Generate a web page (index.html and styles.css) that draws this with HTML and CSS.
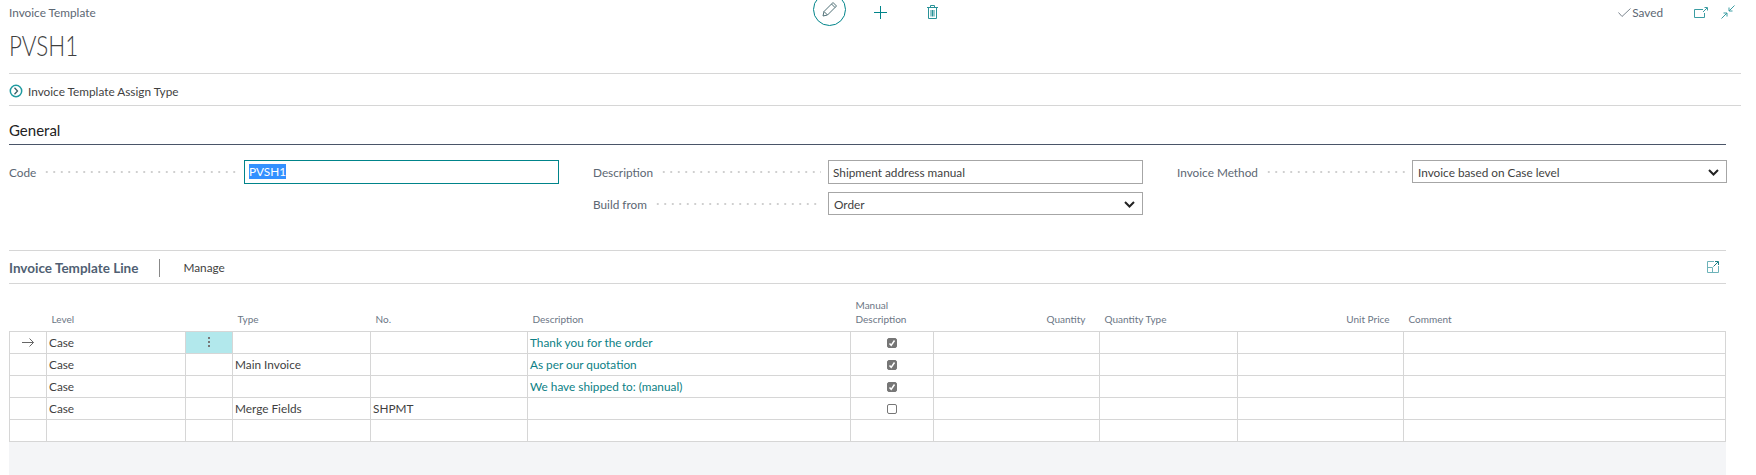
FILE: index.html
```html
<!DOCTYPE html>
<html lang="en">
<head>
    <meta charset="UTF-8">
    <title>Invoice Template</title>
    <link rel="stylesheet" href="styles.css">
</head>
<body>
    <div class="page">
        <!-- top bar -->
        <div class="topbar">
            <div class="caption">Invoice Template</div>
            <div class="tools">
                <span class="edit-btn">
                    <svg width="17" height="17" viewBox="0 0 17 17" fill="none" stroke="#4f6f76" stroke-width="1"><path d="M2 15l1-4.500L12 1.500l3.500 3.500L6.500 14z"/><path d="M3 10.500l3.500 3.500M10.500 3l3.500 3.500"/></svg>
                </span>
                <svg width="13" height="13" viewBox="0 0 13 13" stroke="#00848a" stroke-width="1"><path d="M0 6.500h13M6.500 0v13"/></svg>
                <svg width="11" height="14" viewBox="0 0 11 14" fill="none" stroke="#2a9298" stroke-width="1"><path d="M0 2.500h11M3.500 2.500V.5h4v2M1.500 2.500v11h8v-11"/><path d="M4 5v6.500M5.500 5v6.500M7 5v6.500"/></svg>
            </div>
            <div class="status">
                <svg width="13" height="9" viewBox="0 0 13 9" fill="none" stroke="#7d8790" stroke-width="1"><path d="M.5 4.500l3.500 4L12.500.5"/></svg>
                <span class="saved">Saved</span>
                <svg class="open-icon" width="14" height="11" viewBox="0 0 14 11" fill="none" stroke="#3b9da3" stroke-width="1"><path d="M9 2.500H.5v8h10V6"/><path d="M9 5l4-4M10.500.5H13.500V3.500"/></svg>
                <svg width="14" height="14" viewBox="0 0 14 14" fill="none" stroke="#3b9da3" stroke-width="1"><path d="M13.500.5L8 6M8 2.500V6h3.500"/><path d="M.5 13.500L6 8M2.500 8H6v3.500"/></svg>
            </div>
        </div>
        <h1 class="title"><span class="title-text">PVSH1</span></h1>

        <div class="actions">
            <svg width="14" height="14" viewBox="0 0 14 14" fill="none"><circle cx="7" cy="7" r="5.700" stroke="#1f9aa0" stroke-width="1.500"/><path d="M5.500 3.800L8.500 7 5.500 10.200" stroke="#3a5f66" stroke-width="1.300"/></svg>
            <span>Invoice Template Assign Type</span>
        </div>

        <div class="section">
            <h2 class="section-title">General</h2>
            <div class="fields">
                <div class="col">
                    <div class="field">
                        <span class="label">Code</span><span class="dots"></span>
                        <div class="box box-focus"><span class="selected">PVSH1</span></div>
                    </div>
                </div>
                <div class="col">
                    <div class="field">
                        <span class="label">Description</span><span class="dots"></span>
                        <div class="box">Shipment address manual</div>
                    </div>
                    <div class="field">
                        <span class="label">Build from</span><span class="dots"></span>
                        <div class="box box-select">Order
                            <svg width="11" height="7" viewBox="0 0 11 7" fill="none" stroke="#222" stroke-width="2"><path d="M1 1l4.500 4.500L10 1"/></svg>
                        </div>
                    </div>
                </div>
                <div class="col">
                    <div class="field field-top">
                        <span class="label">Invoice Method</span><span class="dots"></span>
                        <div class="box box-select">Invoice based on Case level
                            <svg width="11" height="7" viewBox="0 0 11 7" fill="none" stroke="#222" stroke-width="2"><path d="M1 1l4.500 4.500L10 1"/></svg>
                        </div>
                    </div>
                </div>
            </div>
        </div>

        <div class="lines">
            <div class="lines-bar">
                <span class="lines-title">Invoice Template Line</span>
                <span class="lines-manage">Manage</span>
                <svg class="expand" width="12" height="12" viewBox="0 0 12 12" fill="none" stroke="#6db3b9" stroke-width="1"><path d="M7 .5H.5v11h11V5"/><path d="M.5 6.500h5v5"/><path d="M6.500 5.500L11 1M8 .5h3.500V4" stroke="#1b7f86"/></svg>
            </div>

            <table class="grid">
                <colgroup>
                    <col class="c-arrow"><col class="c-level"><col class="c-menu"><col class="c-type"><col class="c-no">
                    <col class="c-desc"><col class="c-manual"><col class="c-qty"><col class="c-qtype"><col class="c-price"><col>
                </colgroup>
                <thead>
                    <tr>
                        <th></th><th>Level</th><th></th><th>Type</th><th>No.</th><th>Description</th>
                        <th>Manual<br>Description</th><th class="num">Quantity</th><th>Quantity Type</th><th class="num">Unit Price</th><th>Comment</th>
                    </tr>
                </thead>
                <tbody>
                    <tr>
                        <td class="arrow"><svg width="12" height="9" viewBox="0 0 12 9" fill="none" stroke="#666" stroke-width="1"><path d="M0 4.500h11.500M7.500.5l4 4-4 4"/></svg></td>
                        <td>Case</td>
                        <td class="menu"><span class="kebab"><i></i><i></i><i></i></span></td>
                        <td></td><td></td>
                        <td class="link">Thank you for the order</td>
                        <td class="check"><span class="cb on"><svg width="8" height="8" viewBox="0 0 8 8" fill="none" stroke="#fff" stroke-width="1.500"><path d="M1.500 4.500L3.200 6.300 6.500 1.500"/></svg></span></td>
                        <td></td><td></td><td></td><td></td>
                    </tr>
                    <tr>
                        <td></td><td>Case</td><td></td><td>Main Invoice</td><td></td>
                        <td class="link">As per our quotation</td>
                        <td class="check"><span class="cb on"><svg width="8" height="8" viewBox="0 0 8 8" fill="none" stroke="#fff" stroke-width="1.500"><path d="M1.500 4.500L3.200 6.300 6.500 1.500"/></svg></span></td>
                        <td></td><td></td><td></td><td></td>
                    </tr>
                    <tr>
                        <td></td><td>Case</td><td></td><td></td><td></td>
                        <td class="link">We have shipped to: (manual)</td>
                        <td class="check"><span class="cb on"><svg width="8" height="8" viewBox="0 0 8 8" fill="none" stroke="#fff" stroke-width="1.500"><path d="M1.500 4.500L3.200 6.300 6.500 1.500"/></svg></span></td>
                        <td></td><td></td><td></td><td></td>
                    </tr>
                    <tr>
                        <td></td><td>Case</td><td></td><td>Merge Fields</td><td>SHPMT</td><td></td>
                        <td class="check"><span class="cb"></span></td>
                        <td></td><td></td><td></td><td></td>
                    </tr>
                    <tr>
                        <td></td><td></td><td></td><td></td><td></td><td></td><td></td><td></td><td></td><td></td><td></td>
                    </tr>
                </tbody>
            </table>
            <div class="filler"></div>
        </div>
    </div>
</body>
</html>
```

FILE: styles.css
```css
*{
    margin: 0;
    padding: 0;
    box-sizing: border-box;
}
html,body{
    height: 100%;
    overflow: hidden;
}
body{
    background: #fff;
    color: #3f3f3f;
    font-family: "Lato", "Open Sans", sans-serif;
    font-size: 11.8px;
}
.page{
    height: 100%;
    padding-left: 9px;
    padding-right: 15px;
    display: flex;
    flex-direction: column;
}

/* top bar */
.topbar{
    height: 24px;
    display: grid;
    grid-template-columns: 1fr auto 1fr;
    grid-template-rows: 24px;
    align-items: center;
}
.caption{
    color: #5c6773;
}
.tools{
    display: flex;
    align-items: center;
    gap: 40px;
}
.edit-btn{
    width: 33px;
    height: 33px;
    flex: none;
    margin-top: -5px;
    margin-right: -12px;
    border: 1px solid #00848a;
    border-radius: 50%;
    display: flex;
    align-items: center;
    justify-content: center;
}
.status{
    display: flex;
    align-items: center;
    justify-content: flex-end;
    padding-right: 6px;
}
.saved{
    margin-left: 1px;
    color: #5c6773;
}
.open-icon{
    margin-left: 31px;
    margin-right: 13px;
}
.title{
    height: 49px;
    margin-top: 1px;
    font-size: 27px;
    font-weight: 300;
    line-height: 42px;
    border-bottom: 1px solid #d6d6d6;
}
.title-text{
    display: inline-block;
    transform: scaleX(.83);
    transform-origin: left;
}
.actions{
    height: 32px;
    padding-top: 3px;
    display: flex;
    align-items: center;
    gap: 5px;
    border-bottom: 1px solid #d6d6d6;
}

/* General */
.section{
    padding-right: 15px;
}
.section-title{
    height: 39px;
    padding-top: 14px;
    font-size: 15px;
    line-height: 20px;
    font-weight: 400;
    color: #222;
    border-bottom: 1px solid #4a5568;
}
.fields{
    display: grid;
    grid-template-columns: repeat(3, 550px);
    column-gap: 34px;
    margin-top: 15px;
    height: 90px;
}
.col{
    display: flex;
    flex-direction: column;
    gap: 8px;
}
.field{
    display: flex;
    align-items: center;
}
.field-top{
    height: 24px;
}
.label{
    padding-top: 1px;
    color: #5c6773;
    white-space: nowrap;
}
.dots{
    flex: 1;
    height: 2px;
    margin: 0 7px;
    background-image: radial-gradient(circle, #cfcfcf 0.7px, transparent 0.8px);
    background-size: 7.500px 2px;
}
.box{
    width: 315px;
    height: 24px;
    padding: 1px 0 0 4px;
    border: 1px solid #a6a6a6;
    line-height: 21px;
}
.box-focus{
    border-color: #00848a;
    padding-top: 0;
}
.selected{
    display: inline-block;
    height: 15px;
    line-height: 15px;
    background: #3390ff;
    color: #fff;
}
.box-select{
    height: 23px;
    display: flex;
    align-items: center;
    justify-content: space-between;
    padding: 1px 7px 0 5px;
}
.field-top .box-select{
    align-self: flex-start;
}

/* lines part */
.lines{
    flex: 1;
    display: flex;
    flex-direction: column;
    padding-right: 15px;
}
.lines-bar{
    height: 34px;
    padding-top: 1px;
    display: flex;
    align-items: center;
    border-top: 1px solid #d6d6d6;
    border-bottom: 1px solid #d6d6d6;
}
.lines-title{
    font-size: 13.500px;
    font-weight: 700;
    color: #505f73;
    padding-right: 21px;
    border-right: 1px solid #888;
    line-height: 18px;
}
.lines-manage{
    margin-left: 23px;
}
.expand{
    margin-left: auto;
    margin-right: 7px;
    margin-top: -2px;
}
.grid{
    width: 100%;
    table-layout: fixed;
    border-collapse: collapse;
}
.c-arrow{ width: 37px; }
.c-level{ width: 139px; }
.c-menu{ width: 47px; }
.c-type{ width: 138px; }
.c-no{ width: 157px; }
.c-desc{ width: 323px; }
.c-manual{ width: 83px; }
.c-qty{ width: 166px; }
.c-qtype{ width: 138px; }
.c-price{ width: 166px; }
.grid th{
    height: 47px;
    padding: 0 5px 5px;
    font-size: 10px;
    font-weight: 400;
    line-height: 14px;
    color: #6b7685;
    text-align: left;
    vertical-align: bottom;
}
.grid th.num{
    text-align: right;
    padding-right: 14px;
}
.grid td{
    height: 22px;
    padding: 2px 3px 0 2px;
    border: 1px solid #d6d6d6;
    line-height: 14px;
    white-space: nowrap;
}
.grid td.link{
    color: #0c7f85;
}
.grid td.arrow,
.grid td.check{
    text-align: center;
    padding: 1px 0 0;
    line-height: 0;
}
.grid td.menu{
    padding: 0;
    background: #b2e8ec;
    text-align: center;
    line-height: 0;
}
.kebab{
    display: inline-flex;
    flex-direction: column;
    gap: 2px;
    vertical-align: middle;
}
.kebab i{
    width: 2px;
    height: 2px;
    background: #777;
}
.cb{
    display: inline-flex;
    align-items: center;
    justify-content: center;
    width: 10px;
    height: 10px;
    border: 1px solid #767676;
    border-radius: 2px;
}
.cb.on{
    background: #767676;
}
.filler{
    flex: 1;
    background: #f4f5f7;
}
```
